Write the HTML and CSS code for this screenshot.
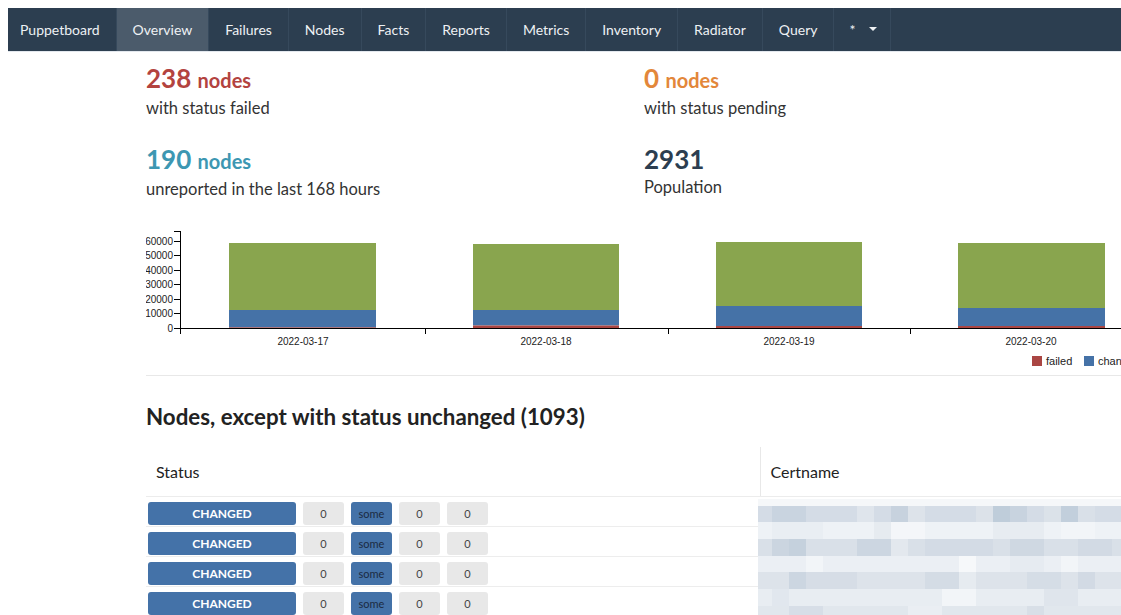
FILE: index.html
```html
<!DOCTYPE html>
<html lang="en">
<head>
<meta charset="utf-8">
<title>Puppetboard - Overview</title>
<link rel="stylesheet" href="styles.css">
</head>
<body>
<div class="page">
  <nav class="topnav">
    <a class="item brand">Puppetboard</a>
    <a class="item active">Overview</a>
    <a class="item">Failures</a>
    <a class="item">Nodes</a>
    <a class="item">Facts</a>
    <a class="item">Reports</a>
    <a class="item">Metrics</a>
    <a class="item">Inventory</a>
    <a class="item">Radiator</a>
    <a class="item">Query</a>
    <a class="item env">* <span class="caret"></span></a>
  </nav>

  <main class="main">
    <section class="stats">
      <div class="stat">
        <div class="num failed">238 <small>nodes</small></div>
        <div class="label">with status failed</div>
      </div>
      <div class="stat">
        <div class="num pending">0 <small>nodes</small></div>
        <div class="label">with status pending</div>
      </div>
      <div class="stat">
        <div class="num unreported">190 <small>nodes</small></div>
        <div class="label">unreported in the last 168 hours</div>
      </div>
      <div class="stat">
        <div class="num population">2931</div>
        <div class="label">Population</div>
      </div>
    </section>

    <svg class="chart" width="1000" height="146" viewBox="0 0 1000 146">
      <g class="y-axis">
        <path d="M28,2H34V99H28" />
        <line x1="28" y1="12" x2="34" y2="12" />
        <line x1="28" y1="26.5" x2="34" y2="26.5" />
        <line x1="28" y1="41" x2="34" y2="41" />
        <line x1="28" y1="55.5" x2="34" y2="55.5" />
        <line x1="28" y1="70" x2="34" y2="70" />
        <line x1="28" y1="84.5" x2="34" y2="84.5" />
        <text x="27" y="15.5">60000</text>
        <text x="27" y="30">50000</text>
        <text x="27" y="44.5">40000</text>
        <text x="27" y="59">30000</text>
        <text x="27" y="73.5">20000</text>
        <text x="27" y="88">10000</text>
        <text x="27" y="102.5">0</text>
      </g>
      <g class="bars">
        <rect class="g" x="83" y="14" width="147" height="67" />
        <rect class="b" x="83" y="81" width="147" height="17.4" />
        <rect class="r" x="83" y="98.4" width="147" height="0.8" />

        <rect class="g" x="327" y="15" width="146" height="66" />
        <rect class="b" x="327" y="81" width="146" height="15.5" />
        <rect class="r" x="327" y="96.5" width="146" height="2.6" />

        <rect class="g" x="570" y="13" width="146" height="64" />
        <rect class="b" x="570" y="77" width="146" height="20" />
        <rect class="r" x="570" y="97" width="146" height="2.2" />

        <rect class="g" x="812" y="14" width="147" height="65" />
        <rect class="b" x="812" y="79" width="147" height="18" />
        <rect class="r" x="812" y="97" width="147" height="2.2" />
      </g>
      <g class="x-axis">
        <path d="M34,105V99H1000" />
        <line x1="279" y1="99" x2="279" y2="105" />
        <line x1="522" y1="99" x2="522" y2="105" />
        <line x1="764" y1="99" x2="764" y2="105" />
        <text x="157" y="115.5">2022-03-17</text>
        <text x="400" y="115.5">2022-03-18</text>
        <text x="643" y="115.5">2022-03-19</text>
        <text x="885" y="115.5">2022-03-20</text>
      </g>
      <g class="legend">
        <rect class="r" x="886" y="127" width="10" height="10" />
        <text x="900" y="136">failed</text>
        <rect class="b" x="938" y="127" width="10" height="10" />
        <text x="952" y="136">changed</text>
      </g>
    </svg>

    <div class="divider"></div>

    <h2 class="section-title">Nodes, except with status unchanged (1093)</h2>

    <div class="nodes">
      <table class="node-table">
        <colgroup>
          <col class="c-status">
          <col class="c-cert">
        </colgroup>
        <thead>
          <tr><th>Status</th><th class="cert">Certname</th></tr>
        </thead>
        <tbody>
          <tr>
            <td>
              <div class="status-line">
                <span class="badge">CHANGED</span>
                <span class="count">0</span>
                <span class="count some">some</span>
                <span class="count">0</span>
                <span class="count">0</span>
              </div>
            </td>
            <td></td>
          </tr>
          <tr>
            <td>
              <div class="status-line">
                <span class="badge">CHANGED</span>
                <span class="count">0</span>
                <span class="count some">some</span>
                <span class="count">0</span>
                <span class="count">0</span>
              </div>
            </td>
            <td></td>
          </tr>
          <tr>
            <td>
              <div class="status-line">
                <span class="badge">CHANGED</span>
                <span class="count">0</span>
                <span class="count some">some</span>
                <span class="count">0</span>
                <span class="count">0</span>
              </div>
            </td>
            <td></td>
          </tr>
          <tr>
            <td>
              <div class="status-line">
                <span class="badge">CHANGED</span>
                <span class="count">0</span>
                <span class="count some">some</span>
                <span class="count">0</span>
                <span class="count">0</span>
              </div>
            </td>
            <td></td>
          </tr>
        </tbody>
      </table>

      <!-- pixelated cover over the certname column -->
      <svg class="redact" width="380" height="124" viewBox="0 0 380 124">
        <rect x="0" y="0" width="380" height="7" fill="#f5f7f9" />
        <!-- row 1 -->
        <rect x="0" y="7" width="380" height="16" fill="#d4dce6" />
        <rect x="14" y="7" width="34" height="16" fill="#c9d4e0" />
        <rect x="99" y="7" width="17" height="16" fill="#dfe5ec" />
        <rect x="133" y="7" width="17" height="16" fill="#c7d2de" />
        <rect x="150" y="7" width="17" height="16" fill="#dde3ea" />
        <rect x="218" y="7" width="17" height="16" fill="#dce2e9" />
        <rect x="235" y="7" width="17" height="16" fill="#bfcdda" />
        <rect x="252" y="7" width="17" height="16" fill="#c8d3df" />
        <rect x="286" y="7" width="17" height="16" fill="#dbe2e9" />
        <rect x="303" y="7" width="17" height="16" fill="#c2cfdc" />
        <rect x="320" y="7" width="17" height="16" fill="#d9e0e8" />
        <!-- row 2 -->
        <rect x="0" y="23" width="380" height="17" fill="#eef2f6" />
        <rect x="14" y="23" width="51" height="17" fill="#e9eef3" />
        <rect x="116" y="23" width="17" height="17" fill="#e6ebf0" />
        <rect x="133" y="23" width="34" height="17" fill="#f4f6f9" />
        <rect x="235" y="23" width="51" height="17" fill="#e7ecf1" />
        <rect x="303" y="23" width="34" height="17" fill="#f2f5f8" />
        <!-- row 3 -->
        <rect x="0" y="40" width="380" height="17" fill="#d9e0e8" />
        <rect x="14" y="40" width="17" height="17" fill="#cbd5e0" />
        <rect x="31" y="40" width="17" height="17" fill="#c5d1dd" />
        <rect x="99" y="40" width="34" height="17" fill="#ccd6e1" />
        <rect x="133" y="40" width="17" height="17" fill="#e3e8ee" />
        <rect x="167" y="40" width="68" height="17" fill="#d3dbe5" />
        <rect x="252" y="40" width="34" height="17" fill="#cfd8e2" />
        <rect x="320" y="40" width="34" height="17" fill="#d2dae4" />
        <!-- row 4 -->
        <rect x="0" y="57" width="380" height="16" fill="#ebeff4" />
        <rect x="48" y="57" width="17" height="16" fill="#f2f5f8" />
        <rect x="201" y="57" width="17" height="16" fill="#f6f8fa" />
        <rect x="252" y="57" width="34" height="16" fill="#e6ebf1" />
        <rect x="303" y="57" width="17" height="16" fill="#f2f5f8" />
        <!-- row 5 -->
        <rect x="0" y="73" width="380" height="17" fill="#dde3ea" />
        <rect x="31" y="73" width="17" height="17" fill="#ccd6e1" />
        <rect x="48" y="73" width="51" height="17" fill="#d6dde6" />
        <rect x="167" y="73" width="34" height="17" fill="#d4dce5" />
        <rect x="201" y="73" width="17" height="17" fill="#e6ebf0" />
        <rect x="269" y="73" width="34" height="17" fill="#d5dde6" />
        <rect x="320" y="73" width="17" height="17" fill="#d2dae4" />
        <!-- row 6 -->
        <rect x="0" y="90" width="380" height="17" fill="#e8edf2" />
        <rect x="14" y="90" width="17" height="17" fill="#e1e7ee" />
        <rect x="184" y="90" width="34" height="17" fill="#f2f5f8" />
        <rect x="286" y="90" width="34" height="17" fill="#dfe5ec" />
        <!-- row 7 -->
        <rect x="0" y="107" width="380" height="17" fill="#e1e7ed" />
        <rect x="31" y="107" width="34" height="17" fill="#d7dee7" />
        <rect x="150" y="107" width="34" height="17" fill="#eaeef3" />
        <rect x="269" y="107" width="17" height="17" fill="#d8dfe7" />
      </svg>
    </div>
  </main>
</div>
</body>
</html>
```

FILE: styles.css
```css
html,
body {
  margin: 0;
  background: #ffffff;
  overflow: hidden;
}

body {
  font-family: Lato, "Noto Sans", "Liberation Sans", sans-serif;
  color: #222222;
}

.page {
  padding: 8px 0 0 8px;
}

/* top navigation bar */
.topnav {
  display: flex;
  height: 43px;
  background: #2c3e50;
  box-shadow: 0 1px 0 #e3e8ee;
}

.topnav .item {
  display: flex;
  align-items: center;
  padding: 0 16px 1px;
  font-size: 14px;
  color: #eef1f4;
  border-right: 1px solid #36495c;
  text-decoration: none;
  white-space: nowrap;
}

.topnav .brand {
  padding-left: 12px;
}

.topnav .active {
  background: #4b5b6b;
}

.topnav .env {
  padding: 0 13px 1px 15px;
}

.caret {
  display: inline-block;
  margin-left: 14px;
  width: 0;
  height: 0;
  border-top: 4px solid #eef1f4;
  border-left: 4px solid transparent;
  border-right: 4px solid transparent;
}

/* page body */
.main {
  margin-left: 138px;
  width: 1000px;
}

.stats {
  display: grid;
  grid-template-columns: 498px 498px;
  row-gap: 24px;
  padding-top: 12px;
}

.stat .num {
  font-size: 26px;
  font-weight: 700;
  line-height: 30px;
}

.stat .num small {
  font-size: 20px;
}

.stat .label {
  padding-top: 1px;
  font-size: 16.5px;
  line-height: 24px;
  color: #333333;
}

.num.failed { color: #b3433f; }
.num.pending { color: #e3873a; }
.num.unreported { color: #3d97b2; }
.num.population { color: #2c3e50; }

/* report chart */
.chart {
  display: block;
  margin-top: 28px;
  font-family: "Liberation Sans", Arial, sans-serif;
}

.chart path,
.chart line {
  fill: none;
  stroke: #000000;
  stroke-width: 1;
  shape-rendering: crispEdges;
}

.chart .y-axis text {
  font-size: 10px;
  text-anchor: end;
  fill: #222222;
}

.chart .x-axis text {
  font-size: 10px;
  text-anchor: middle;
  fill: #222222;
}

.chart .legend text {
  font-size: 11px;
  fill: #222222;
}

.chart .g { fill: #89a54e; }
.chart .b { fill: #4572a7; }
.chart .r { fill: #aa4643; }

.divider {
  border-top: 1px solid #e8e8e8;
}

.section-title {
  margin: 27px 0 16px;
  font-size: 22.3px;
  line-height: 28px;
  font-weight: 700;
  color: #222222;
}

/* node table */
.nodes {
  position: relative;
}

.node-table {
  width: 1000px;
  border-collapse: collapse;
  table-layout: fixed;
}

.c-status { width: 614px; }
.c-cert { width: 386px; }

.node-table th {
  padding: 14px 10px;
  font-size: 16px;
  line-height: 21px;
  font-weight: 400;
  text-align: left;
  color: #222222;
  border-bottom: 1px solid #ececec;
}

.node-table th.cert {
  border-left: 1px solid #e8e8e8;
}

.node-table td {
  padding: 5px 2px 1px;
  border-bottom: 1px solid #ededed;
}

.status-line {
  display: flex;
  gap: 7px;
}

.badge {
  display: flex;
  align-items: center;
  justify-content: center;
  width: 148px;
  height: 23px;
  border-radius: 3px;
  background: #4472a8;
  color: #ffffff;
  font-size: 12px;
  font-weight: 700;
}

.count {
  display: flex;
  align-items: center;
  justify-content: center;
  width: 41px;
  height: 23px;
  border-radius: 3px;
  background: #e8e8e8;
  color: #444444;
  font-size: 11px;
}

.count.some {
  background: #4472a8;
  color: #1b2a42;
}

.redact {
  position: absolute;
  left: 612px;
  top: 52px;
}
```
